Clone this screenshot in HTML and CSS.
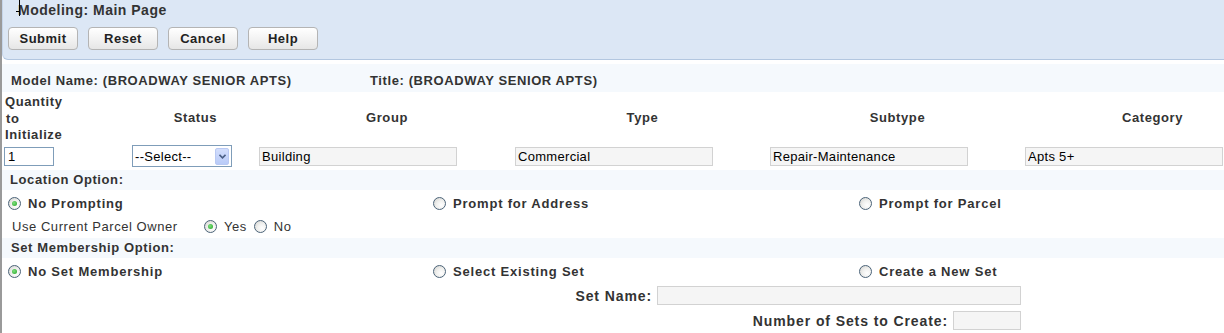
FILE: index.html
```html
<!DOCTYPE html>
<html>
<head>
<meta charset="utf-8">
<title>Modeling: Main Page</title>
<link rel="stylesheet" href="styles.css">
</head>
<body>
<div class="page">
  <svg class="cursor" width="6" height="18" viewBox="0 0 6 18"><path d="M3.5 0V16M0 11.5H3.5" stroke="#000" stroke-width="1" fill="none"/></svg>
  <header class="toolbar">
    <h1 class="title">Modeling: Main Page</h1>
    <div class="actions">
      <button class="btn">Submit</button>
      <button class="btn">Reset</button>
      <button class="btn">Cancel</button>
      <button class="btn">Help</button>
    </div>
  </header>

  <div class="band model-row">
    <span class="model-name">Model Name: (BROADWAY SENIOR APTS)</span>
    <span class="model-title">Title: (BROADWAY SENIOR APTS)</span>
  </div>

  <div class="grid-wrap">
    <div class="init-grid">
      <div class="col-head qty-head"><div class="qty-text">Quantity<br><span class="indent">to</span><br>Initialize</div></div>
      <div class="col-head center">Status</div>
      <div class="col-head center">Group</div>
      <div class="col-head center">Type</div>
      <div class="col-head center">Subtype</div>
      <div class="col-head center">Category</div>

      <div class="cell"><input class="qty-input" type="text" value="1"></div>
      <div class="cell">
        <div class="select">
          <span class="select-text">--Select--</span>
          <span class="select-btn"><svg width="7" height="5" viewBox="0 0 7 5"><path d="M0.5 0.8L3.5 3.8L6.5 0.8" stroke="#4a5f86" stroke-width="1.6" fill="none"/></svg></span>
        </div>
      </div>
      <div class="cell"><input class="text-input ro" type="text" value="Building" readonly></div>
      <div class="cell"><input class="text-input ro" type="text" value="Commercial" readonly></div>
      <div class="cell"><input class="text-input ro" type="text" value="Repair-Maintenance" readonly></div>
      <div class="cell"><input class="text-input ro" type="text" value="Apts 5+" readonly></div>
    </div>
  </div>

  <div class="band section-head">Location Option:</div>
  <div class="option-row">
    <label class="opt"><span class="radio checked"></span>No Prompting</label>
    <label class="opt"><span class="radio"></span>Prompt for Address</label>
    <label class="opt"><span class="radio"></span>Prompt for Parcel</label>
  </div>
  <div class="owner-row">
    <span class="owner-label">Use Current Parcel Owner</span>
    <label class="yn"><span class="radio checked"></span>Yes</label>
    <label class="yn"><span class="radio"></span>No</label>
  </div>

  <div class="band section-head set-head">Set Membership Option:</div>
  <div class="option-row">
    <label class="opt"><span class="radio checked"></span>No Set Membership</label>
    <label class="opt"><span class="radio"></span>Select Existing Set</label>
    <label class="opt"><span class="radio"></span>Create a New Set</label>
  </div>

  <div class="set-fields">
    <div class="field-row"><span class="field-label">Set Name:</span><input class="text-input set-name" type="text"></div>
    <div class="field-row"><span class="field-label">Number of Sets to Create:</span><input class="text-input set-count" type="text"></div>
  </div>
</div>
</body>
</html>
```

FILE: styles.css
```css
html, body {
  margin: 0;
  padding: 0;
  overflow: hidden;
  background: #fff;
}

body {
  width: 1224px;
  height: 333px;
  font-family: "Liberation Sans", Arial, sans-serif;
  font-size: 13px;
  letter-spacing: 0.55px;
  color: #333;
}

.page {
  position: relative;
  height: 333px;
  border-left: 2px solid #9a9a9a;
  box-sizing: border-box;
  overflow: hidden;
}

.cursor {
  position: absolute;
  left: 14px;
  top: 0;
}

.toolbar {
  height: 60px;
  box-sizing: border-box;
  background: #dce7f5;
  border-bottom: 1px solid #b3c7e0;
  border-left: 1px solid #c5d5ea;
  border-bottom-left-radius: 6px;
  padding-left: 15px;
}

.title {
  margin: 0;
  font-size: 14px;
  line-height: 20px;
  font-weight: bold;
  letter-spacing: 0.5px;
  color: #333;
}

.actions {
  display: flex;
  gap: 10px;
  margin-top: 7px;
  margin-left: -10px;
}

.btn {
  width: 70px;
  height: 23px;
  box-sizing: border-box;
  padding: 0;
  border: 1px solid #b4b4b4;
  border-radius: 4px;
  background: linear-gradient(#ffffff, #f3f3f3 50%, #e6e6e6);
  font-family: "Liberation Sans", Arial, sans-serif;
  font-size: 13px;
  font-weight: bold;
  letter-spacing: 0.5px;
  color: #222;
}

.band {
  background: #f5f9fd;
  font-weight: bold;
  letter-spacing: 0.6px;
}

.model-row {
  margin-top: 4px;
  height: 28px;
  box-sizing: border-box;
  padding: 9px 0 0 9px;
  line-height: 16px;
  display: flex;
}

.model-name {
  width: 359px;
}

.grid-wrap {
  overflow: hidden;
  padding-left: 2px;
}

.init-grid {
  display: grid;
  grid-template-columns: 128px 127px 256px 255px 255px 255px;
  grid-template-rows: 53px 25px;
  width: 1276px;
}

.col-head {
  font-weight: bold;
  letter-spacing: 0.6px;
  display: flex;
  align-items: center;
  line-height: 16.5px;
}

.col-head.center {
  justify-content: center;
}

.qty-head {
  padding-left: 1px;
  padding-top: 1px;
}

.indent {
  padding-left: 1px;
}

.cell {
  padding-top: 2px;
}

.qty-input {
  display: block;
  width: 50px;
  height: 19px;
  box-sizing: border-box;
  border: 1px solid #7f9db9;
  padding: 0 3px;
  font-family: "Liberation Sans", Arial, sans-serif;
  font-size: 13px;
  color: #000;
  background: #fff;
  outline: none;
}

.select {
  width: 100px;
  height: 22px;
  margin-top: -2px;
  box-sizing: border-box;
  border: 1px solid #7f9db9;
  background: #fff;
  display: flex;
  align-items: center;
  padding-left: 2px;
  color: #000;
}

.select-text {
  flex: 1;
  letter-spacing: 0.3px;
}

.select-btn {
  width: 14px;
  height: 17px;
  margin-right: 2px;
  box-sizing: border-box;
  border: 1px solid #b9c9f3;
  border-radius: 2px;
  background: linear-gradient(#d3defc, #b9cbf8);
  display: flex;
  align-items: center;
  justify-content: center;
}

.text-input {
  display: block;
  height: 19px;
  box-sizing: border-box;
  border: 1px solid #d2d2d2;
  padding: 0 2px;
  font-family: "Liberation Sans", Arial, sans-serif;
  font-size: 13px;
  letter-spacing: 0.3px;
  color: #000;
  background: #f5f5f5;
  outline: none;
}

.ro {
  width: 198px;
}

.section-head {
  height: 20px;
  line-height: 20px;
  padding-left: 8px;
}

.set-head {
  padding-left: 9px;
}

.option-row {
  height: 25px;
  display: grid;
  grid-template-columns: 425px 426px 1fr;
  align-items: center;
  padding-left: 6px;
  font-weight: bold;
  letter-spacing: 0.8px;
}

.opt {
  display: flex;
  align-items: center;
  padding-top: 1px;
}

.radio {
  width: 13px;
  height: 13px;
  box-sizing: border-box;
  border-radius: 50%;
  border: 1px solid #4b6378;
  background: radial-gradient(circle at 65% 65%, #ffffff 0%, #f0f0ee 45%, #cfcfcb 100%);
  margin-right: 7px;
  position: relative;
  flex: none;
}

.radio.checked::after {
  content: "";
  position: absolute;
  left: 3px;
  top: 3px;
  width: 5px;
  height: 5px;
  border-radius: 50%;
  background: radial-gradient(circle at 40% 40%, #7ee07e, #21a221);
}

.owner-row {
  height: 23px;
  display: flex;
  align-items: center;
  padding-left: 10px;
}

.owner-label {
  width: 192px;
}

.yn {
  display: flex;
  align-items: center;
  margin-right: 7px;
}

.yn .radio {
  margin-right: 7px;
}

.set-fields {
  width: 1019px;
  display: flex;
  flex-direction: column;
  align-items: flex-end;
  gap: 6px;
  margin-top: 3px;
}

.field-row {
  display: flex;
  align-items: center;
  gap: 5px;
  font-weight: bold;
  font-size: 14px;
  letter-spacing: 0.9px;
}

.set-name {
  width: 364px;
}

.set-count {
  width: 68px;
}
```
